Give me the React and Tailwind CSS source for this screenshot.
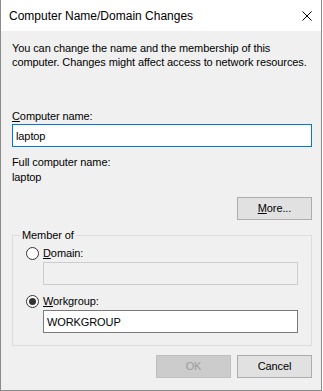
import React, { useState } from 'react';

const Radio = ({ checked }) => (
  <span className="w-[13px] h-[13px] rounded-full border border-[#333333] bg-white flex items-center justify-center shrink-0">
    {checked && <span className="w-[7px] h-[7px] rounded-full bg-[#333333]"></span>}
  </span>
);

const Button = ({ children, disabled }) => (
  <button
    disabled={disabled}
    className={`w-[75px] h-[23px] border text-[11px] leading-none ${
      disabled
        ? 'bg-[#cccccc] border-[#bfbfbf] text-[#9a9a9a]'
        : 'bg-[#e1e1e1] border-[#adadad] text-black'
    }`}
  >
    {children}
  </button>
);

const App = () => {
  const [name, setName] = useState('laptop');
  const [member, setMember] = useState('workgroup');
  const [group, setGroup] = useState('WORKGROUP');

  return (
    <div className="w-[323px] h-[391px] bg-white" style={{ fontFamily: '"Liberation Sans", Arial, sans-serif' }}>
      <div className="w-[322px] h-[391px] border-x border-b border-[#8a8a8a] bg-[#f0f0f0] flex flex-col text-black">
        {/* Title bar */}
        <div className="h-[31px] bg-white flex items-center justify-between pl-[8px] pr-[9px] shrink-0">
          <span className="text-[12px]">Computer Name/Domain Changes</span>
          <svg width="10" height="10" viewBox="0 0 10 10" className="text-black">
            <path d="M0.5 0.5 L9.5 9.5 M9.5 0.5 L0.5 9.5" stroke="currentColor" strokeWidth="1" fill="none" />
          </svg>
        </div>

        {/* Body */}
        <div className="flex-1 pl-[11px] pr-[9px] pt-[10px] text-[11px] leading-[14px] tracking-[-0.1px]">
          <p className="whitespace-nowrap">
            You can change the name and the membership of this
            <br />
            computer. Changes might affect access to network resources.
          </p>

          <div className="mt-[40px]">
            <span className="underline">C</span>omputer name:
          </div>
          <input
            value={name}
            onChange={(e) => setName(e.target.value)}
            className="block mt-[1px] w-full h-[23px] border border-[#0078d7] bg-white px-[3px] text-[11px] outline-none"
          />

          <div className="mt-[8px] leading-[15px]">
            <div>Full computer name:</div>
            <div>{name}</div>
          </div>

          <div className="mt-[12px] flex justify-end">
            <Button><span className="underline">M</span>ore...</Button>
          </div>

          {/* Member of group */}
          <div className="relative mt-[15px] border border-[#dcdcdc] pl-[13px] pr-[14px] pt-[10px] pb-[12px]">
            <span className="absolute -top-[8px] left-[7px] bg-[#f0f0f0] px-[2px]">Member of</span>

            <label className="flex items-center gap-[4px] h-[14px]" onClick={() => setMember('domain')}>
              <Radio checked={member === 'domain'} />
              <span><span className="underline">D</span>omain:</span>
            </label>
            <input
              disabled={member !== 'domain'}
              className="block ml-[17px] mt-[2px] w-[255px] h-[23px] border border-[#cccccc] bg-[#f0f0f0] px-[3px] text-[11px] outline-none"
            />

            <label className="flex items-center gap-[4px] h-[14px] mt-[9px]" onClick={() => setMember('workgroup')}>
              <Radio checked={member === 'workgroup'} />
              <span><span className="underline">W</span>orkgroup:</span>
            </label>
            <input
              value={group}
              onChange={(e) => setGroup(e.target.value)}
              className="block ml-[17px] mt-[2px] w-[255px] h-[23px] border border-[#7a7a7a] bg-white px-[3px] text-[11px] outline-none"
            />
          </div>

          <div className="mt-[9px] flex justify-end gap-[6px]">
            <Button disabled>OK</Button>
            <Button>Cancel</Button>
          </div>
        </div>
      </div>
    </div>
  );
};

export default App;
